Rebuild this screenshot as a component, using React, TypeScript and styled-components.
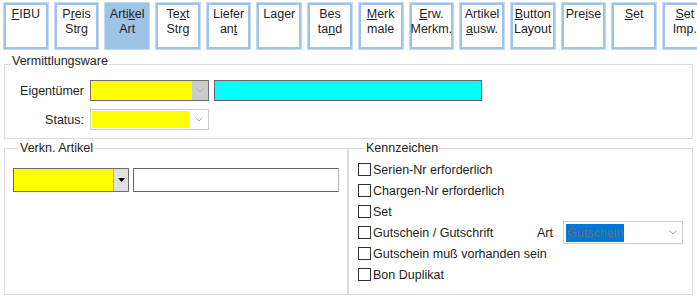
import React from 'react';
import styled, { createGlobalStyle } from 'styled-components';

const GlobalStyle = createGlobalStyle`
  html, body {
    margin: 0;
    padding: 0;
    background: #ffffff;
  }

  body {
    font-family: "Liberation Sans", Arial, sans-serif;
    font-size: 12.5px;
    color: #1e1e1e;
  }
`;

const Page = styled.div`
  width: 697px;
  height: 297px;
  overflow: hidden;
  display: flex;
  flex-direction: column;
`;

const Toolbar = styled.div`
  display: flex;
  gap: 5px;
  height: 48px;
  padding: 2px 0 0 3px;
  overflow: hidden;
  flex: 0 0 auto;
`;

const ToolButton = styled.div<{ $active?: boolean }>`
  flex: 0 0 45.7px;
  box-sizing: border-box;
  height: 48px;
  border: 1px solid #c4dbf1;
  box-shadow: inset 0 0 0 2px #9dc3e6;
  background: ${(p) => (p.$active ? '#9dc3e6' : '#ffffff')};
  padding-top: 4px;
  text-align: center;
  line-height: 15px;
  white-space: nowrap;

  & u {
    text-decoration: underline;
    text-underline-offset: 1px;
  }
`;

const Group = styled.fieldset<{ $height?: number }>`
  box-sizing: border-box;
  margin: 0;
  min-width: 0;
  padding: 0;
  border: 1px solid #dcdcdc;
  ${(p) => (p.$height ? `height: ${p.$height}px;` : '')}
`;

const Legend = styled.legend<{ $pad?: number }>`
  margin-left: ${(p) => (p.$pad ?? 6)}px;
  padding: 0 1px ${(p) => (p.$pad === undefined ? 5 : 0)}px;
  line-height: 15px;
  color: #222;
`;

const TopGroup = styled(Group)`
  margin: 4px 4px 0;
  padding: 6px 0 8px;
`;

const FormRow = styled.div`
  display: flex;
  align-items: center;
  height: 21px;

  & + & {
    margin-top: 8px;
  }
`;

const FieldLabel = styled.div`
  flex: 0 0 79px;
  text-align: right;
  margin-right: 6px;
`;

const Combo = styled.div<{ $fill: string; $border: string; $w: number; $h: number }>`
  box-sizing: border-box;
  width: ${(p) => p.$w}px;
  height: ${(p) => p.$h}px;
  border: 1px solid ${(p) => p.$border};
  background: ${(p) => p.$fill};
  display: flex;
  align-items: stretch;
`;

const ComboBody = styled.div<{ $fill?: string; $inset?: number }>`
  flex: 1;
  margin: ${(p) => p.$inset ?? 0}px;
  background: ${(p) => p.$fill ?? 'transparent'};
  display: flex;
  align-items: center;
`;

const DropButton = styled.div<{ $bg?: string; $line?: string; $w: number }>`
  flex: 0 0 ${(p) => p.$w}px;
  display: flex;
  align-items: center;
  justify-content: center;
  background: ${(p) => p.$bg ?? 'transparent'};
  ${(p) => (p.$line ? `border-left: 1px solid ${p.$line};` : '')}
`;

const TextBox = styled.div<{ $fill?: string; $w: number; $h: number; $soft?: boolean; $gap?: number }>`
  box-sizing: border-box;
  width: ${(p) => p.$w}px;
  height: ${(p) => p.$h}px;
  margin-left: ${(p) => p.$gap ?? 0}px;
  border: 1px solid #646464;
  ${(p) => (p.$soft ? 'border-right-color: #b4b4b4;' : '')}
  background: ${(p) => p.$fill ?? '#ffffff'};
`;

const BottomRow = styled.div`
  display: flex;
  margin: 2px 4px 0;
`;

const LinkGroup = styled(Group)`
  flex: 0 0 344px;
  padding: 12px 8px 0;
`;

const FlagGroup = styled(Group)`
  flex: 1;
  padding: 3px 9px 0;
`;

const InputLine = styled.div`
  display: flex;
  gap: 4px;
`;

const CheckRow = styled.div`
  display: flex;
  align-items: center;
  height: 21px;
`;

const CheckLabel = styled.label<{ $w?: number }>`
  display: flex;
  align-items: center;
  gap: 2px;
  ${(p) => (p.$w ? `flex: 0 0 ${p.$w}px;` : '')}
`;

const Box = styled.span`
  box-sizing: border-box;
  width: 13px;
  height: 13px;
  border: 1px solid #333;
  background: #fff;
  flex: 0 0 13px;
`;

const ArtLabel = styled.span`
  margin-right: 10px;
`;

const Selected = styled.span`
  margin-left: 2px;
  padding: 0 1px;
  line-height: 18px;
  background: #0078d7;
  color: #6d6d6d;
`;

const Chevron = ({ color = '#a8a8a8' }: { color?: string }) => (
  <svg width="8" height="5" viewBox="0 0 8 5">
    <polyline points="0.5,0.5 4,4 7.5,0.5" fill="none" stroke={color} strokeWidth="1" />
  </svg>
);

const Triangle = () => (
  <svg width="7" height="4" viewBox="0 0 7 4">
    <polygon points="0,0 7,0 3.5,4" fill="#000" />
  </svg>
);

const buttons: { lines: React.ReactNode[]; active?: boolean }[] = [
  { lines: [<><u>F</u>IBU</>] },
  { lines: [<>P<u>r</u>eis</>, 'Strg'] },
  { lines: [<>Arti<u>k</u>el</>, 'Art'], active: true },
  { lines: [<>Te<u>x</u>t</>, 'Strg'] },
  { lines: ['Liefer', <>an<u>t</u></>] },
  { lines: [<>La<u>g</u>er</>] },
  { lines: ['Bes', <>ta<u>n</u>d</>] },
  { lines: [<><u>M</u>erk</>, 'male'] },
  { lines: [<><u>E</u>rw.</>, 'Merkm.'] },
  { lines: ['Artikel', <><u>a</u>usw.</>] },
  { lines: [<><u>B</u>utton</>, 'Layout'] },
  { lines: [<>Pre<u>i</u>se</>] },
  { lines: [<><u>S</u>et</>] },
  { lines: [<><u>S</u>et</>, 'Imp.'] },
];

const flags = [
  'Serien-Nr erforderlich',
  'Chargen-Nr erforderlich',
  'Set',
  'Gutschein / Gutschrift',
  'Gutschein muß vorhanden sein',
  'Bon Duplikat',
];

const App = () => {
  return (
    <>
      <GlobalStyle />
      <Page>
        <Toolbar>
          {buttons.map((b, i) => (
            <ToolButton key={i} $active={b.active}>
              {b.lines.map((l, j) => (
                <div key={j}>{l}</div>
              ))}
            </ToolButton>
          ))}
        </Toolbar>

        <TopGroup>
          <Legend>Vermittlungsware</Legend>
          <FormRow>
            <FieldLabel>Eigentümer</FieldLabel>
            <Combo $fill="#ffff00" $border="#6e6e6e" $w={119} $h={21}>
              <ComboBody />
              <DropButton $bg="#cccccc" $w={16}>
                <Chevron />
              </DropButton>
            </Combo>
            <TextBox $fill="#00ffff" $w={268} $h={21} $gap={5} />
          </FormRow>
          <FormRow>
            <FieldLabel>Status:</FieldLabel>
            <Combo $fill="#ffffff" $border="#cccccc" $w={119} $h={21}>
              <ComboBody $fill="#ffff00" $inset={1} />
              <DropButton $w={18}>
                <Chevron />
              </DropButton>
            </Combo>
          </FormRow>
        </TopGroup>

        <BottomRow>
          <LinkGroup $height={154}>
            <Legend $pad={6}>Verkn. Artikel</Legend>
            <InputLine>
              <Combo $fill="#ffff00" $border="#6e6e6e" $w={116} $h={24}>
                <ComboBody />
                <DropButton $bg="#e1e1e1" $line="#adadad" $w={14}>
                  <Triangle />
                </DropButton>
              </Combo>
              <TextBox $w={206} $h={24} $soft />
            </InputLine>
          </LinkGroup>

          <FlagGroup $height={154}>
            <Legend $pad={7}>Kennzeichen</Legend>
            {flags.map((f) =>
              f === 'Gutschein / Gutschrift' ? (
                <CheckRow key={f}>
                  <CheckLabel $w={179}>
                    <Box />
                    {f}
                  </CheckLabel>
                  <ArtLabel>Art</ArtLabel>
                  <Combo $fill="#ffffff" $border="#cccccc" $w={125} $h={23}>
                    <ComboBody>
                      <Selected>Gutschein</Selected>
                    </ComboBody>
                    <DropButton $w={18}>
                      <Chevron />
                    </DropButton>
                  </Combo>
                </CheckRow>
              ) : (
                <CheckRow key={f}>
                  <CheckLabel>
                    <Box />
                    {f}
                  </CheckLabel>
                </CheckRow>
              )
            )}
          </FlagGroup>
        </BottomRow>
      </Page>
    </>
  );
};

export default App;
